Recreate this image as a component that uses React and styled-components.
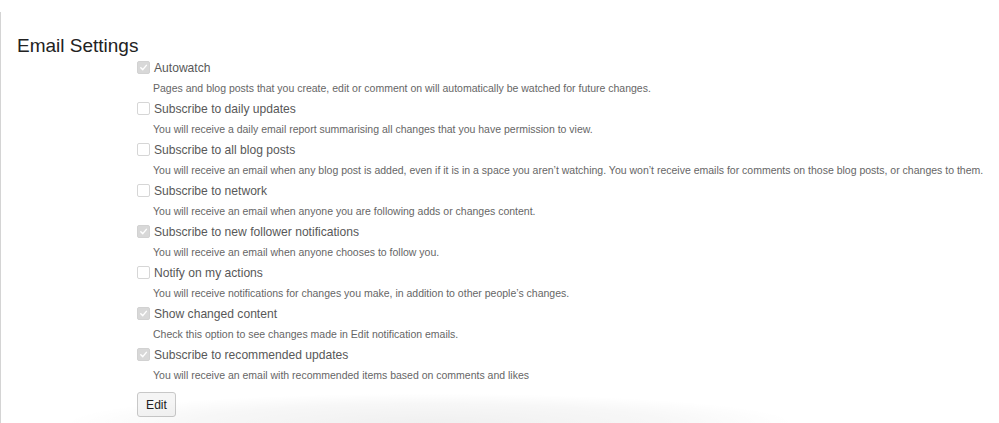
import React from 'react'
import styled, { createGlobalStyle } from 'styled-components'

const Global = createGlobalStyle`
  html, body {
    margin: 0;
    padding: 0;
    background: #fff;
    font-family: "Liberation Sans", Arial, sans-serif;
  }
`;

const Page = styled.div`
  position: relative;
  width: 999px;
  height: 423px;
  overflow: hidden;
  background: #fff;
`;

const Panel = styled.section`
  margin-top: 12px;
  border-left: 1px solid #d4d4d4;
  height: 411px;
  box-sizing: border-box;
  padding-top: 23px;
`;

const Title = styled.h2`
  margin: 0 0 0 16px;
  font-size: 19px;
  font-weight: normal;
  color: #222;
  line-height: 22px;
`;

const List = styled.div`
  margin: 0 0 0 136px;
  display: flex;
  flex-direction: column;
`;

const Item = styled.div`
  height: 41px;
  display: flex;
  flex-direction: column;
`;

const LabelRow = styled.label`
  display: flex;
  align-items: center;
  height: 21px;
  font-size: 12.1px;
  color: #585858;
`;

const Box = styled.span`
  width: 11px;
  height: 11px;
  border-radius: 2px;
  border: 1px solid ${p => (p.checked ? '#d2d2d2' : '#d6d6d6')};
  background: ${p => (p.checked ? '#d8d8d8' : '#fff')};
  margin-right: 4px;
  display: flex;
  align-items: center;
  justify-content: center;
  flex: none;
`;

const Desc = styled.div`
  height: 20px;
  line-height: 20px;
  margin-left: 16px;
  font-size: 10.5px;
  color: #666;
  white-space: nowrap;
`;

const EditButton = styled.button`
  margin-top: 7px;
  align-self: flex-start;
  width: 39px;
  height: 25px;
  padding: 0;
  border: 1px solid #c8c8c8;
  border-radius: 3px;
  background: #f5f5f5;
  font-family: "Liberation Sans", Arial, sans-serif;
  font-size: 12.1px;
  color: #222;
`;

const Shade = styled.div`
  position: absolute;
  left: 60px;
  bottom: -30px;
  width: 740px;
  height: 60px;
  border-radius: 50%;
  background: radial-gradient(ellipse at center, rgba(0,0,0,0.06) 0%, rgba(0,0,0,0.03) 45%, rgba(0,0,0,0) 70%);
  pointer-events: none;
`;

const Check = ({ checked }) => (
  <Box checked={checked}>
    {checked && (
      <svg width="9" height="9" viewBox="0 0 10 10">
        <path d="M2 5.2 L4.2 7.4 L8.2 2.6" fill="none" stroke="#fff" strokeWidth="1.6" strokeLinecap="round" strokeLinejoin="round" />
      </svg>
    )}
  </Box>
);

const settings = [
  { label: 'Autowatch', checked: true, desc: 'Pages and blog posts that you create, edit or comment on will automatically be watched for future changes.' },
  { label: 'Subscribe to daily updates', checked: false, desc: 'You will receive a daily email report summarising all changes that you have permission to view.' },
  { label: 'Subscribe to all blog posts', checked: false, desc: 'You will receive an email when any blog post is added, even if it is in a space you aren\u2019t watching. You won\u2019t receive emails for comments on those blog posts, or changes to them.' },
  { label: 'Subscribe to network', checked: false, desc: 'You will receive an email when anyone you are following adds or changes content.' },
  { label: 'Subscribe to new follower notifications', checked: true, desc: 'You will receive an email when anyone chooses to follow you.' },
  { label: 'Notify on my actions', checked: false, desc: 'You will receive notifications for changes you make, in addition to other people\u2019s changes.' },
  { label: 'Show changed content', checked: true, desc: 'Check this option to see changes made in Edit notification emails.' },
  { label: 'Subscribe to recommended updates', checked: true, desc: 'You will receive an email with recommended items based on comments and likes' },
];

export default function App() {
  return (
    <Page>
      <Global />
      <Panel>
        <Title>Email Settings</Title>
        <List>
          {settings.map((s, i) => (
            <Item key={i}>
              <LabelRow>
                <Check checked={s.checked} />
                {s.label}
              </LabelRow>
              <Desc>{s.desc}</Desc>
            </Item>
          ))}
          <EditButton>Edit</EditButton>
        </List>
      </Panel>
      <Shade />
    </Page>
  )
}
